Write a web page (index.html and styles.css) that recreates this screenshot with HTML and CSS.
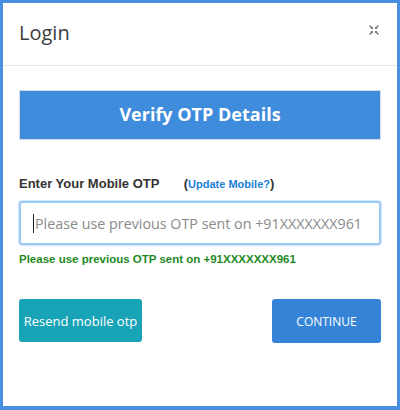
FILE: index.html
```html
<!DOCTYPE html>
<html>
<head>
<meta charset="utf-8">
<link rel="stylesheet" href="styles.css">
</head>
<body>
<div class="modal">
  <div class="modal-header">
    <h4 class="title">Login</h4>
    <button class="close" aria-label="Close">
      <svg width="10" height="10" viewBox="0 0 10 10">
        <g fill="#777">
          <path d="M0 1 L1 0 L3.2 2.2 L4 1.4 L4 4 L1.4 4 L2.2 3.2 Z"/>
          <path d="M10 1 L9 0 L6.8 2.2 L6 1.4 L6 4 L8.6 4 L7.8 3.2 Z"/>
          <path d="M0 9 L1 10 L3.2 7.8 L4 8.6 L4 6 L1.4 6 L2.2 6.8 Z"/>
          <path d="M10 9 L9 10 L6.8 7.8 L6 8.6 L6 6 L8.6 6 L7.8 6.8 Z"/>
        </g>
      </svg>
    </button>
  </div>
  <div class="modal-body">
    <div class="banner">Verify OTP Details</div>
    <label class="label">Enter Your Mobile OTP <span class="paren">(<a class="update" href="#">Update Mobile?</a>)</span></label>
    <div class="input"><span class="caret"></span><span class="placeholder">Please use previous OTP sent on +91XXXXXXX961</span></div>
    <p class="hint">Please use previous OTP sent on +91XXXXXXX961</p>
    <div class="actions">
      <button class="btn btn-resend">Resend mobile otp</button>
      <button class="btn btn-continue">CONTINUE</button>
    </div>
  </div>
</div>
</body>
</html>
```
FILE: styles.css
```css
* { box-sizing: border-box; }
html, body { margin: 0; padding: 0; background: #fff; }
.modal {
  width: 400px;
  height: 410px;
  border: 3px solid #4a90e2;
  border-bottom-width: 4px;
  background: #fff;
  font-family: "Open Sans", sans-serif;
}
.modal-header {
  height: 63px;
  border-bottom: 1px solid #e5e5e5;
  display: flex;
  align-items: center;
  justify-content: space-between;
  padding: 0 16px 4px 16px;
}
.title {
  margin: 0;
  font-family: "Open Sans", sans-serif;
  font-weight: 400;
  font-size: 20px;
  color: #3d3d3d;
}
.close {
  border: 0;
  background: none;
  padding: 0;
  width: 10px;
  height: 10px;
  display: flex;
  margin-right: 2px;
  margin-bottom: 4px;
}
.modal-body {
  padding: 24px 16px 0 16px;
}
.banner {
  height: 50px;
  background: #408cdc;
  border: 1px solid #d6dde5;
  color: #fff;
  font-family: "Open Sans", sans-serif;
  font-weight: 700;
  font-size: 18px;
  display: flex;
  align-items: center;
  justify-content: center;
  padding-bottom: 2px;
}
.label {
  display: block;
  margin-top: 36px;
  font-family: "Liberation Sans", Arial, sans-serif;
  font-weight: 700;
  font-size: 13px;
  color: #333;
}
.paren { margin-left: 21px; }
.update {
  color: #1a7fd6;
  font-size: 11px;
  text-decoration: none;
}
.input {
  margin-top: 10px;
  height: 44px;
  border: 2px solid #9ccaf6;
  border-radius: 3px;
  box-shadow: 0 0 0 1px #d2e6fb;
  display: flex;
  align-items: center;
  padding-left: 12px;
  font-family: "Open Sans", sans-serif;
  font-size: 14.3px;
  color: #8a8a8a;
  white-space: nowrap;
}
.caret {
  width: 1px;
  height: 19px;
  background: #222;
  margin-right: 1px;
}
.hint {
  margin: 8px 0 0 0;
  font-family: "Liberation Sans", Arial, sans-serif;
  font-weight: 700;
  font-size: 11.5px;
  color: #1e8a1e;
}
.actions {
  margin-top: 34px;
  display: flex;
  justify-content: space-between;
}
.btn {
  border: 0;
  border-radius: 3px;
  color: #fff;
  font-family: "Open Sans", sans-serif;
  height: 43px;
  padding: 0;
  white-space: nowrap;
}
.btn-resend {
  width: 123px;
  background: #19a3b7;
  font-size: 13px;
}
.btn-continue {
  width: 109px;
  height: 44px;
  background: #3584d8;
  font-size: 12px;
}
```
